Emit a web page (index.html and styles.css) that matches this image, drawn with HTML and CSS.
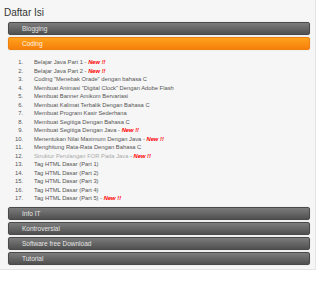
FILE: index.html
```html
<!DOCTYPE html>
<html lang="id">
<head>
<meta charset="UTF-8">
<title>Daftar Isi</title>
<link rel="stylesheet" href="styles.css">
</head>
<body>
<div class="panel">
    <h2 class="title">Daftar Isi</h2>
    <div class="bar">Blogging</div>
    <div class="bar active">Coding</div>
    <ol class="toc">
        <li><a href="#">Belajar Java Part 1</a> - <span class="new">New !!</span></li>
        <li><a href="#">Belajar Java Part 2</a> - <span class="new">New !!</span></li>
        <li><a href="#">Coding "Menebak Orade" dengan bahasa C</a></li>
        <li><a href="#">Membuat Animasi "Digital Clock" Dengan Adobe Flash</a></li>
        <li><a href="#">Membuat Banner Amikom Bervariasi</a></li>
        <li><a href="#">Membuat Kalimat Terbalik Dengan Bahasa C</a></li>
        <li><a href="#">Membuat Program Kasir Sederhana</a></li>
        <li><a href="#">Membuat Segitiga Dengan Bahasa C</a></li>
        <li><a href="#">Membuat Segitiga Dengan Java</a> - <span class="new">New !!</span></li>
        <li><a href="#">Menentukan Nilai Maximum Dengan Java</a> - <span class="new">New !!</span></li>
        <li><a href="#">Menghitung Rata-Rata Dengan Bahasa C</a></li>
        <li><a href="#" class="visited">Struktur Perulangan FOR Pada Java</a> - <span class="new">New !!</span></li>
        <li><a href="#">Tag HTML Dasar (Part 1)</a></li>
        <li><a href="#">Tag HTML Dasar (Part 2)</a></li>
        <li><a href="#">Tag HTML Dasar (Part 3)</a></li>
        <li><a href="#">Tag HTML Dasar (Part 4)</a></li>
        <li><a href="#">Tag HTML Dasar (Part 5)</a> - <span class="new">New !!</span></li>
    </ol>
    <div class="bar">Info IT</div>
    <div class="bar">Kontroversial</div>
    <div class="bar">Software free Download</div>
    <div class="bar">Tutorial</div>
</div>
</body>
</html>
```
FILE: styles.css
```css
body{
    margin: 0;
    background-color: #ffffff;
    font-family: "Liberation Sans", Arial, sans-serif;
}
.panel{
    width: 316px;
    height: 270px;
    background-color: #f6f6f6;
    border-right: 1px solid #e4e4e4;
    border-bottom: 1px solid #e4e4e4;
    box-sizing: border-box;
    padding-top: 7px;
}
.title{
    margin: 0 0 3px 4px;
    font-size: 10px;
    font-weight: normal;
    line-height: 12px;
    color: #333;
}
.bar{
    margin: 0 0 2px 8px;
    width: 302px;
    height: 13px;
    box-sizing: border-box;
    padding-left: 13px;
    font-size: 6.5px;
    line-height: 11px;
    color: #e4e4e4;
    background: linear-gradient(#7c7c7c, #505050);
    border: 1px solid #4a4a4a;
    border-radius: 2px;
    box-shadow: 0 0 1px #bbb;
}
.bar.active{
    color: #fff3e0;
    background: linear-gradient(#ffa21c, #f5800c);
    border-color: #f08010;
}
.toc{
    list-style: none;
    counter-reset: num;
    margin: 0;
    padding: 6px 0 4px 0;
    font-size: 5.8px;
    line-height: 8.5px;
    color: #555;
}
.toc li{
    counter-increment: num;
    white-space: nowrap;
}
.toc li::before{
    content: counter(num) ".";
    display: inline-block;
    width: 23px;
    margin-right: 11px;
    text-align: right;
}
.toc a{
    color: #555;
    text-decoration: none;
}
.toc a.visited{
    color: #aaa;
}
.new{
    color: #ff0000;
    font-weight: bold;
    font-style: italic;
}
```
